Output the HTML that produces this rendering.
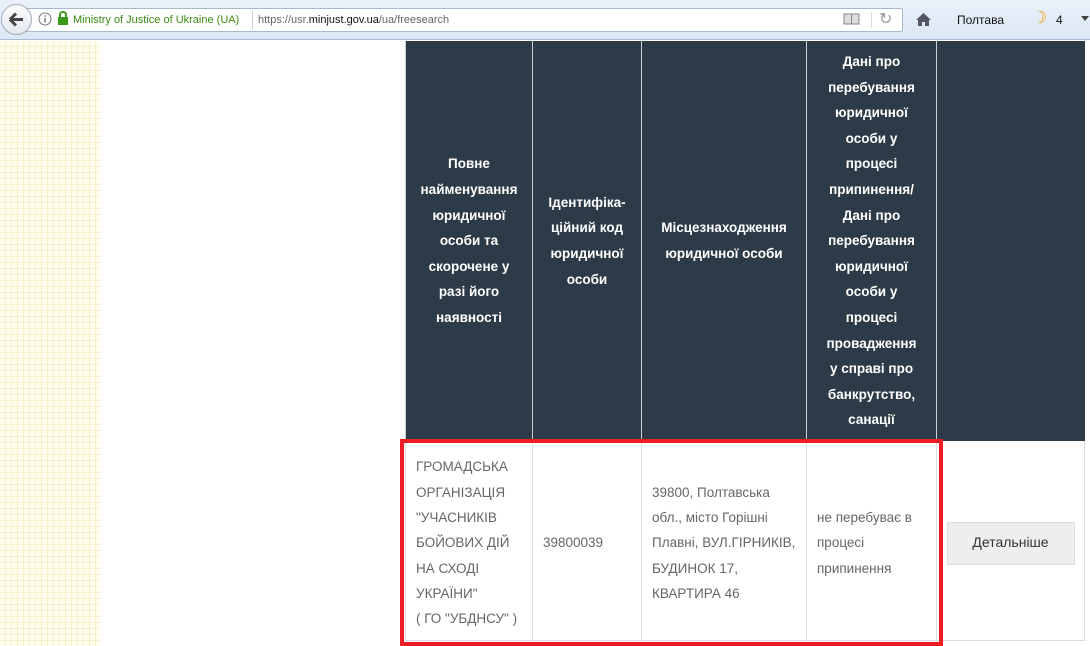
<!DOCTYPE html>
<html><head><meta charset="utf-8"><style>
*{margin:0;padding:0;box-sizing:border-box}
body{width:1090px;height:646px;overflow:hidden;background:#fff;font-family:"Liberation Sans",sans-serif;position:relative}
.tb{position:absolute;left:0;top:0;width:1090px;height:40px;background:linear-gradient(#eaf1fa,#dbe7f4);border-bottom:1px solid #a9bed6}
.url{position:absolute;left:24px;top:8px;width:879px;height:24px;background:#fff;border:1px solid #a8b9cc;border-radius:2px}
.back{position:absolute;left:1px;top:4px;width:31px;height:31px;border-radius:50%;background:linear-gradient(#fdfdfd,#e4e9ef);border:1px solid #a0adbc}
.pat{position:absolute;left:0;top:41px;width:100px;height:605px;background-color:#fffde6;
background-image:repeating-linear-gradient(90deg,transparent 0 5px,#f6eab8 5px 6px),repeating-linear-gradient(0deg,transparent 0 5px,#f6eab8 5px 6px);opacity:.7}
.hd{position:absolute;top:41px;height:400px;background:#2d3b48;color:#fff;font-weight:bold;font-size:13.5px;line-height:25.6px;text-align:center;display:flex;align-items:center;justify-content:center;border-right:1px solid #c9d0d6}
.bd{position:absolute;top:441px;height:200px;color:#666;font-size:13.5px;line-height:25.3px;display:flex;align-items:center;padding-left:10px;padding-top:5px;border-right:1px solid #ddd;border-bottom:1px solid #ddd}
</style></head><body>
<div class="tb">
<div class="url"></div>
<div class="back"><svg width="29" height="29" viewBox="0 0 29 29"><path d="M8 14.5h13M8 14.5l6-6M8 14.5l6 6" stroke="#444" stroke-width="3" fill="none"/></svg></div>
<svg style="position:absolute;left:38px;top:12px" width="14" height="14"><circle cx="7" cy="7" r="6" fill="none" stroke="#777"/><rect x="6.3" y="6" width="1.5" height="4.5" fill="#777"/><rect x="6.3" y="3.3" width="1.5" height="1.5" fill="#777"/></svg>
<svg style="position:absolute;left:57px;top:11px" width="12" height="15"><rect x="1" y="6" width="10" height="8" fill="#3a9a1c"/><path d="M3 6V4a3 3 0 0 1 6 0v2" stroke="#3a9a1c" stroke-width="2" fill="none"/></svg>
<div style="position:absolute;left:73px;top:14px;font-size:11px;color:#3a8a10">Ministry of Justice of Ukraine (UA)</div>
<div style="position:absolute;left:252px;top:11px;width:1px;height:18px;background:#ccc"></div>
<div style="position:absolute;left:258px;top:14px;font-size:11px;color:#666">https://usr.<span style="color:#111">minjust.gov.ua</span>/ua/freesearch</div>
<svg style="position:absolute;left:843px;top:13px" width="17" height="13"><rect x="1" y="1" width="15" height="10" fill="#ddd" stroke="#888"/><line x1="8.5" y1="1" x2="8.5" y2="11" stroke="#888"/></svg>
<div style="position:absolute;left:871px;top:12px;width:1px;height:16px;background:#ddd"></div>
<div style="position:absolute;left:879px;top:9px;font-size:16px;color:#999">↻</div>
<svg style="position:absolute;left:915px;top:12px" width="17" height="15"><path d="M8.5 1L1 8h2v6h4v-4h3v4h4V8h2z" fill="#556"/></svg>
<div style="position:absolute;left:957px;top:13px;font-size:12px;color:#111">Полтава</div>
<div style="position:absolute;left:1032px;top:8px;font-size:17px;color:#f0a000">☽</div>
<div style="position:absolute;left:1056px;top:13px;font-size:12px;color:#111">4</div>
<div style="position:absolute;left:1081px;top:16px;border:4px solid transparent;border-top:5px solid #444"></div>
</div>
<div class="pat"></div>
<div class="hd" style="left:405px;width:128px;border-left:1px solid #c9d0d6">Повне<br>найменування<br>юридичної<br>особи та<br>скорочене у<br>разі його<br>наявності</div>
<div class="hd" style="left:533px;width:109px">Ідентифіка-<br>ційний код<br>юридичної<br>особи</div>
<div class="hd" style="left:642px;width:165px">Місцезнаходження<br>юридичної особи</div>
<div class="hd" style="left:807px;width:130px">Дані про<br>перебування<br>юридичної<br>особи у<br>процесі<br>припинення/<br>Дані про<br>перебування<br>юридичної<br>особи у<br>процесі<br>провадження<br>у справі про<br>банкрутство,<br>санації</div>
<div class="hd" style="left:937px;width:148px;border-right:none"></div>
<div class="bd" style="left:405px;width:128px;border-left:1px solid #ddd">ГРОМАДСЬКА<br>ОРГАНІЗАЦІЯ<br>"УЧАСНИКІВ<br>БОЙОВИХ ДІЙ<br>НА СХОДІ<br>УКРАЇНИ"<br>( ГО "УБДНСУ" )</div>
<div class="bd" style="left:533px;width:109px">39800039</div>
<div class="bd" style="left:642px;width:165px">39800, Полтавська<br>обл., місто Горішні<br>Плавні, ВУЛ.ГІРНИКІВ,<br>БУДИНОК 17,<br>КВАРТИРА 46</div>
<div class="bd" style="left:807px;width:130px">не перебуває в<br>процесі<br>припинення</div>
<div class="bd" style="left:937px;width:148px;padding-left:0;justify-content:center"><div style="width:128px;height:43px;background:#eee;border:1px solid #ddd;color:#333;font-size:14px;display:flex;align-items:center;justify-content:center">Детальніше</div></div>
<div style="position:absolute;left:400px;top:439px;width:543px;height:207px;border:4px solid #ee1c25"></div>
</body></html>
